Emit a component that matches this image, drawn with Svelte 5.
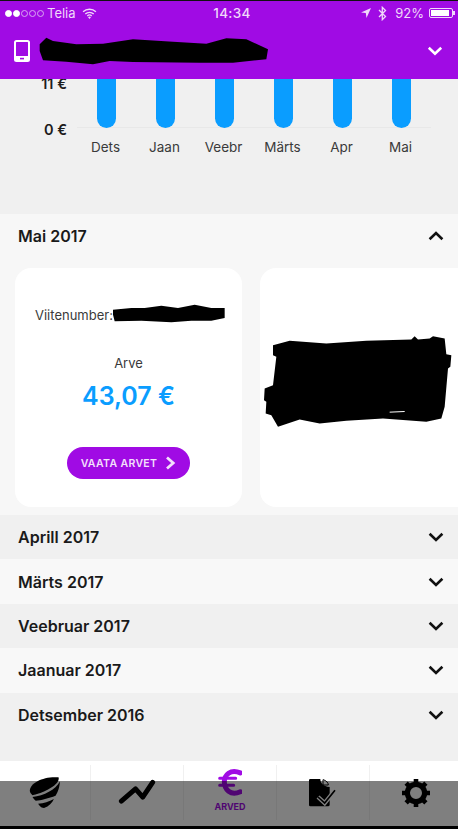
<script>
  const months = ['Dets', 'Jaan', 'Veebr', 'Märts', 'Apr', 'Mai'];
  const rows = ['Aprill 2017', 'Märts 2017', 'Veebruar 2017', 'Jaanuar 2017', 'Detsember 2016'];
</script>

<div class="screen">
  <header class="top">
    <div class="status">
      <div class="status-left">
        <span class="dots">
          <i class="dot on"></i><i class="dot on"></i><i class="dot"></i><i class="dot"></i><i class="dot"></i>
        </span>
        <span>Telia</span>
        <svg width="15" height="11" viewBox="0 0 16 12"><path d="M1 4.2a10 10 0 0 1 14 0M3.4 6.6a6.6 6.6 0 0 1 9.2 0M5.6 8.7a3.4 3.4 0 0 1 4.8 0" fill="none" stroke="#f0d8fa" stroke-width="1.5"/><path d="M8 12l-1.6-2a2.4 2.4 0 0 1 3.2 0z" fill="#f0d8fa"/></svg>
      </div>
      <div class="status-time">14:34</div>
      <div class="status-right">
        <svg width="10" height="10" viewBox="0 0 10 10"><path d="M10 0L0 4.4l4.8.6.7 5z" fill="#f0d8fa"/></svg>
        <svg class="bt" width="9" height="15" viewBox="0 0 9 15"><path d="M1 4l6.5 6.5-3.2 3.2V1.3l3.2 3.2L1 11" fill="none" stroke="#f0d8fa" stroke-width="1.3"/></svg>
        <span>92%</span>
        <span class="battery"><i></i></span>
      </div>
    </div>
    <div class="title">
      <svg width="16" height="22" viewBox="0 0 16 22"><rect x="1" y="1" width="14" height="20" rx="1.5" fill="none" stroke="#fff" stroke-width="2"/><rect x="1" y="16" width="14" height="5" fill="#fff"/><rect x="6" y="17.8" width="4" height="1.6" fill="#a00be4"/></svg>
      <svg class="scribble" width="230" height="28" viewBox="118 108 690 84"><path d="M120 130L140 110 160 120 230 130 310 128 400 115 520 122 620 128 680 112 740 115 805 145 800 175 700 185 600 185 400 183 330 180 280 190 200 182 130 178 120 150z" fill="#000"/></svg>
      <svg class="chev" width="16" height="10" viewBox="0 0 16 10"><path d="M1.8 1.8L8 7.6l6.2-5.8" fill="none" stroke="#fff" stroke-width="2.6"/></svg>
    </div>
  </header>

  <section class="chart">
    <div class="plot">
      <div class="axis">
        <span>11 €</span>
        <span>0 €</span>
      </div>
      <div class="bars">
        {#each months as m}
          <div class="bar"></div>
        {/each}
      </div>
    </div>
    <div class="labels">
      {#each months as m}
        <span>{m}</span>
      {/each}
    </div>
  </section>

  <section class="panel">
    <div class="row">
      <span>Mai 2017</span>
      <svg width="16" height="10" viewBox="0 0 16 10"><path d="M1.6 8.2L8 2l6.4 6.2" fill="none" stroke="#111" stroke-width="2.6"/></svg>
    </div>
    <div class="cards">
      <article class="card">
        <div class="ref">
          <span>Viitenumber:</span>
          <svg width="112" height="19" viewBox="345 278 336 57"><path d="M345 295L400 290 440 290 490 283 540 290 590 280 640 290 680 290 680 320 640 328 580 328 520 333 430 328 350 330 345 310z" fill="#000"/></svg>
        </div>
        <div class="arve">Arve</div>
        <div class="sum">43,07 €</div>
        <button class="cta">
          <span>VAATA ARVET</span>
          <svg width="11" height="14" viewBox="0 0 11 14"><path d="M2 1.5L8.2 7 2 12.5" fill="none" stroke="#f3e0fb" stroke-width="2.8"/></svg>
        </button>
      </article>
      <article class="card second">
        <svg width="190" height="93" viewBox="790 375 570 278"><path d="M820 405L870 392 980 400 1100 392 1235 388 1245 378 1255 388 1290 385 1300 378 1335 385 1340 432 1355 435 1352 470 1345 475 1335 590 1325 625 1280 635 1150 625 1040 632 960 640 900 628 835 650 815 615 798 610 800 575 793 570 795 535 820 525 830 440 820 435z" fill="#000"/><path d="M1170 606L1215 604" fill="none" stroke="#fff" stroke-width="3"/></svg>
      </article>
    </div>
  </section>

  <div class="list">
    {#each rows as r}
      <div class="row item">
        <span>{r}</span>
        <svg width="16" height="10" viewBox="0 0 16 10"><path d="M1.6 1.8L8 8l6.4-6.2" fill="none" stroke="#111" stroke-width="2.6"/></svg>
      </div>
    {/each}
  </div>

  <div class="spacer"></div>

  <nav class="tabs">
    <div class="tab">
      <svg width="32" height="33" viewBox="85 108 96 100">
        <path d="M87 152C88 128 130 108 174 112 178 122 165 140 130 155 115 161 100 166 95 166 90 162 87 158 87 152z" fill="#000"/>
        <path d="M178 125C178 140 172 158 165 168 145 175 120 183 105 183 100 180 97 175 95 172 130 168 165 150 178 125z" fill="#000"/>
        <path d="M160 178C155 190 145 200 130 205 125 205 118 202 112 192 130 192 145 186 160 178z" fill="#000"/>
      </svg>
    </div>
    <div class="tab">
      <svg width="42" height="27" viewBox="350 120 125 82"><path d="M365 187L408 150 430 175 460 130" fill="none" stroke="#000" stroke-width="15" stroke-linecap="round" stroke-linejoin="round"/></svg>
    </div>
    <div class="tab active">
      <svg class="euro" width="24" height="29" viewBox="655 80 72 86">
        <path d="M722 97C692 84 674 104 674 124 674 146 692 168 722 154" fill="none" stroke="#a00be4" stroke-width="15" stroke-linecap="round"/>
        <path d="M660 113H708M660 134H702" fill="none" stroke="#a00be4" stroke-width="9" stroke-linecap="round"/>
      </svg>
      <span class="tab-label">ARVED</span>
    </div>
    <div class="tab">
      <svg width="30" height="30" viewBox="235 55 90 90">
        <path d="M242 58H272C272 70 280 80 300 82V135a5 5 0 0 1-5 5H242a4 4 0 0 1-4-4V62a4 4 0 0 1 4-4z" fill="#000"/>
        <path d="M280 60C290 62 296 70 296 76L280 76z" fill="none" stroke="#000" stroke-width="3"/>
        <path d="M265 112L285 130 316 92" fill="none" stroke="#fff" stroke-width="13"/>
        <path d="M265 112L285 130 316 92" fill="none" stroke="#000" stroke-width="5"/>
      </svg>
    </div>
    <div class="tab gear">
      <svg width="28" height="28" viewBox="0 0 28 28">
        <circle cx="14" cy="14" r="8.6" fill="none" stroke="#000" stroke-width="5.2"/>
        <g stroke="#000" stroke-width="4.6">
          <path d="M14 0v4M14 24v4M0 14h4M24 14h4M4.1 4.1l2.8 2.8M21.1 21.1l2.8 2.8M4.1 23.9l2.8-2.8M21.1 6.9l2.8-2.8"/>
        </g>
      </svg>
    </div>
  </nav>

  <div class="dim"></div>
</div>

<style>
  :global(body) { margin: 0; background: #f0f0f0; }
  .screen {
    position: relative;
    width: 458px;
    height: 829px;
    overflow: hidden;
    display: flex;
    flex-direction: column;
    background: #f0f0f0;
    font-family: Inter, "Liberation Sans", sans-serif;
    color: #1a1a1a;
  }
  .top {
    position: relative;
    z-index: 2;
    height: 78px;
    margin-top: 1px;
    flex: none;
    background: #a00be4;
    box-shadow: 0 -1px 0 #111;
    color: #fff;
  }
  .status {
    height: 24px;
    padding: 0 5px;
    display: grid;
    grid-template-columns: 1fr auto 1fr;
    align-items: center;
    font-size: 13px;
    color: #f0d8fa;
  }
  .status-left { display: flex; align-items: center; gap: 3px; }
  .status-left svg { margin-left: 3px; }
  .status-time { font-weight: 500; font-size: 13.5px; letter-spacing: .3px; padding-left: 6px; }
  .status-right { display: flex; justify-content: flex-end; align-items: center; gap: 5px; }
  .bt { margin: 0 3px 0 2px; }
  .dots { display: flex; gap: 1px; }
  .dot {
    width: 7px; height: 7px;
    box-sizing: border-box;
    border: 1px solid #d9a8f2;
    border-radius: 50%;
  }
  .dot.on { background: #fff; border-color: #fff; }
  .battery {
    width: 24px; height: 10px;
    border: 1px solid #f0d8fa;
    border-radius: 2px;
    padding: 1px;
    box-sizing: border-box;
    position: relative;
  }
  .battery::after {
    content: "";
    position: absolute;
    right: -3px; top: 2px;
    width: 2px; height: 4px;
    background: #f0d8fa;
  }
  .battery i { display: block; width: 92%; height: 100%; background: #fff; }
  .title {
    height: 54px;
    padding: 0 15px 3px 14px;
    box-sizing: border-box;
    display: flex;
    align-items: center;
  }
  .scribble { margin-left: 9px; }
  .chev { margin-left: auto; }

  .chart { height: 135px; flex: none; }
  .plot { height: 50px; display: flex; }
  .axis {
    width: 67px;
    flex: none;
    display: flex;
    flex-direction: column;
    justify-content: space-between;
    align-items: flex-end;
    font-size: 14.5px;
    font-weight: 600;
    color: #1c1c1c;
    margin-top: -4px;
    height: 63.5px;
  }
  .axis span { line-height: 18px; }
  .bars {
    margin-left: 10px;
    width: 354px;
    height: 48px;
    border-bottom: 1px solid #e8e8e8;
    display: grid;
    grid-template-columns: repeat(6, 1fr);
    justify-items: center;
  }
  .bar {
    width: 19px;
    height: 49px;
    background: #0a9dff;
    border-radius: 0 0 10px 10px;
  }
  .labels {
    margin: 9px 0 0 76px;
    width: 354px;
    display: grid;
    grid-template-columns: repeat(6, 1fr);
    justify-items: center;
    font-size: 13.5px;
    line-height: 18px;
    color: #3a3a3a;
  }

  .panel {
    flex: none;
    height: 301px;
    background: #f7f7f7;
    overflow: hidden;
  }
  .row {
    height: 44px;
    padding: 0 14px 0 18px;
    display: flex;
    align-items: center;
    justify-content: space-between;
    font-size: 16px;
    font-weight: 600;
    color: #1a1a1a;
  }
  .cards {
    display: flex;
    gap: 18px;
    margin: 10px 0 0 15px;
    height: 238.5px;
    width: 520px;
  }
  .card {
    flex: none;
    width: 227px;
    background: #fff;
    border-radius: 16px;
    display: flex;
    flex-direction: column;
    align-items: center;
    box-sizing: border-box;
  }
  .card.second { width: 228px; justify-content: center; align-items: flex-start; padding: 0 0 11px 3px; }
  .ref {
    margin-top: 37px;
    width: 100%;
    padding-left: 20px;
    box-sizing: border-box;
    display: flex;
    align-items: center;
    font-size: 13px;
    color: #3a3a3a;
    height: 20px;
  }
  .ref svg { margin-top: -4px; }
  .arve { margin-top: 29px; font-size: 13px; line-height: 18px; color: #3a3a3a; }
  .sum { margin-top: 8px; font-size: 25px; font-weight: 600; line-height: 32px; color: #0a9dff; }
  .cta {
    margin-top: 35px;
    height: 32px;
    width: 123px;
    border: 0;
    border-radius: 16px;
    background: #a00be4;
    color: #f3e0fb;
    font: 600 10.5px Inter, "Liberation Sans", sans-serif;
    letter-spacing: .35px;
    display: flex;
    align-items: center;
    justify-content: center;
    gap: 8px;
    padding: 0;
  }

  .list { flex: none; display: flex; flex-direction: column; }
  .item { height: 44.4px; box-sizing: border-box; background: #f0f0f0; }
  .item:nth-child(even) { background: #f8f8f8; }
  .spacer { flex: 1; }

  .tabs {
    position: relative;
    flex: none;
    height: 65px;
    margin-bottom: 3px;
    background: #fff;
    display: grid;
    grid-template-columns: 91px 93px 93px 93px 88px;
    padding: 4px 0 6px;
    box-sizing: border-box;
  }
  .tab {
    display: flex;
    flex-direction: column;
    align-items: center;
    justify-content: center;
    border-right: 1px solid #f0f0f0;
  }
  .tab:last-child { border-right: 0; }
  .gear { padding-left: 4px; }
  .tab.active { justify-content: flex-start; }
  .euro { flex: none; margin-top: 2px; }
  .tab-label {
    margin-top: 5px;
    font-size: 9px;
    font-weight: 700;
    color: #a00be4;
    line-height: 12px;
  }
  .dim {
    position: absolute;
    left: 0; right: 0; bottom: 0;
    height: 48px;
    background: linear-gradient(#0000 0, #0000 45px, #000 45px), rgba(0, 0, 0, .5);
    z-index: 3;
  }
</style>
